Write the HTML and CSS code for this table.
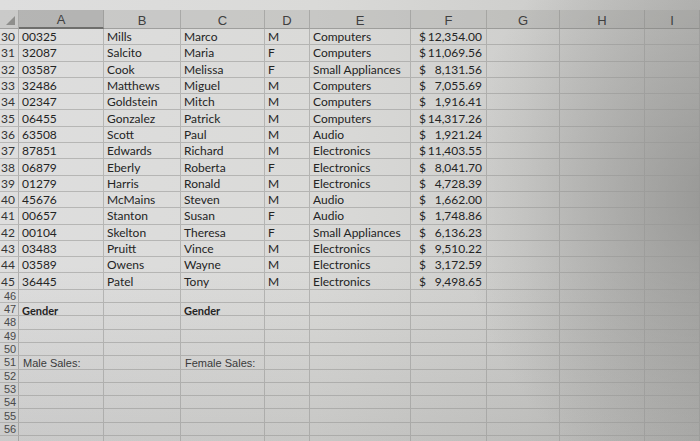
FILE: index.html
```html
<!DOCTYPE html>
<html>
<head>
<meta charset="utf-8">
<link rel="stylesheet" href="styles.css">
</head>
<body>
<div class="sheet">
  <div class="topstrip"></div>
  <div class="grid">
    <div class="hd corner"><span class="tri"></span></div>
    <div class="hd sel">A</div><div class="hd">B</div><div class="hd">C</div><div class="hd">D</div><div class="hd">E</div><div class="hd">F</div><div class="hd">G</div><div class="hd">H</div><div class="hd">I</div>

    <div class="rn">30</div><div class="c">00325</div><div class="c">Mills</div><div class="c">Marco</div><div class="c">M</div><div class="c">Computers</div><div class="c m"><span>$</span><span>12,354.00</span></div><div class="c"></div><div class="c"></div><div class="c"></div>
    <div class="rn">31</div><div class="c">32087</div><div class="c">Salcito</div><div class="c">Maria</div><div class="c">F</div><div class="c">Computers</div><div class="c m"><span>$</span><span>11,069.56</span></div><div class="c"></div><div class="c"></div><div class="c"></div>
    <div class="rn">32</div><div class="c">03587</div><div class="c">Cook</div><div class="c">Melissa</div><div class="c">F</div><div class="c">Small Appliances</div><div class="c m"><span>$</span><span>8,131.56</span></div><div class="c"></div><div class="c"></div><div class="c"></div>
    <div class="rn">33</div><div class="c">32486</div><div class="c">Matthews</div><div class="c">Miguel</div><div class="c">M</div><div class="c">Computers</div><div class="c m"><span>$</span><span>7,055.69</span></div><div class="c"></div><div class="c"></div><div class="c"></div>
    <div class="rn">34</div><div class="c">02347</div><div class="c">Goldstein</div><div class="c">Mitch</div><div class="c">M</div><div class="c">Computers</div><div class="c m"><span>$</span><span>1,916.41</span></div><div class="c"></div><div class="c"></div><div class="c"></div>
    <div class="rn">35</div><div class="c">06455</div><div class="c">Gonzalez</div><div class="c">Patrick</div><div class="c">M</div><div class="c">Computers</div><div class="c m"><span>$</span><span>14,317.26</span></div><div class="c"></div><div class="c"></div><div class="c"></div>
    <div class="rn">36</div><div class="c">63508</div><div class="c">Scott</div><div class="c">Paul</div><div class="c">M</div><div class="c">Audio</div><div class="c m"><span>$</span><span>1,921.24</span></div><div class="c"></div><div class="c"></div><div class="c"></div>
    <div class="rn">37</div><div class="c">87851</div><div class="c">Edwards</div><div class="c">Richard</div><div class="c">M</div><div class="c">Electronics</div><div class="c m"><span>$</span><span>11,403.55</span></div><div class="c"></div><div class="c"></div><div class="c"></div>
    <div class="rn">38</div><div class="c">06879</div><div class="c">Eberly</div><div class="c">Roberta</div><div class="c">F</div><div class="c">Electronics</div><div class="c m"><span>$</span><span>8,041.70</span></div><div class="c"></div><div class="c"></div><div class="c"></div>
    <div class="rn">39</div><div class="c">01279</div><div class="c">Harris</div><div class="c">Ronald</div><div class="c">M</div><div class="c">Electronics</div><div class="c m"><span>$</span><span>4,728.39</span></div><div class="c"></div><div class="c"></div><div class="c"></div>
    <div class="rn">40</div><div class="c">45676</div><div class="c">McMains</div><div class="c">Steven</div><div class="c">M</div><div class="c">Audio</div><div class="c m"><span>$</span><span>1,662.00</span></div><div class="c"></div><div class="c"></div><div class="c"></div>
    <div class="rn">41</div><div class="c">00657</div><div class="c">Stanton</div><div class="c">Susan</div><div class="c">F</div><div class="c">Audio</div><div class="c m"><span>$</span><span>1,748.86</span></div><div class="c"></div><div class="c"></div><div class="c"></div>
    <div class="rn">42</div><div class="c">00104</div><div class="c">Skelton</div><div class="c">Theresa</div><div class="c">F</div><div class="c">Small Appliances</div><div class="c m"><span>$</span><span>6,136.23</span></div><div class="c"></div><div class="c"></div><div class="c"></div>
    <div class="rn">43</div><div class="c">03483</div><div class="c">Pruitt</div><div class="c">Vince</div><div class="c">M</div><div class="c">Electronics</div><div class="c m"><span>$</span><span>9,510.22</span></div><div class="c"></div><div class="c"></div><div class="c"></div>
    <div class="rn">44</div><div class="c">03589</div><div class="c">Owens</div><div class="c">Wayne</div><div class="c">M</div><div class="c">Electronics</div><div class="c m"><span>$</span><span>3,172.59</span></div><div class="c"></div><div class="c"></div><div class="c"></div>
    <div class="rn">45</div><div class="c">36445</div><div class="c">Patel</div><div class="c">Tony</div><div class="c">M</div><div class="c">Electronics</div><div class="c m"><span>$</span><span>9,498.65</span></div><div class="c"></div><div class="c"></div><div class="c"></div>

    <div class="rn s">46</div><div class="c s"></div><div class="c s"></div><div class="c s"></div><div class="c s"></div><div class="c s"></div><div class="c s"></div><div class="c s"></div><div class="c s"></div><div class="c s"></div>
    <div class="rn s">47</div><div class="c s b">Gender</div><div class="c s"></div><div class="c s b">Gender</div><div class="c s"></div><div class="c s"></div><div class="c s"></div><div class="c s"></div><div class="c s"></div><div class="c s"></div>
    <div class="rn s">48</div><div class="c s"></div><div class="c s"></div><div class="c s"></div><div class="c s"></div><div class="c s"></div><div class="c s"></div><div class="c s"></div><div class="c s"></div><div class="c s"></div>
    <div class="rn s">49</div><div class="c s"></div><div class="c s"></div><div class="c s"></div><div class="c s"></div><div class="c s"></div><div class="c s"></div><div class="c s"></div><div class="c s"></div><div class="c s"></div>
    <div class="rn s">50</div><div class="c s"></div><div class="c s"></div><div class="c s"></div><div class="c s"></div><div class="c s"></div><div class="c s"></div><div class="c s"></div><div class="c s"></div><div class="c s"></div>
    <div class="rn s">51</div><div class="c s ar">Male Sales:</div><div class="c s"></div><div class="c s ar">Female Sales:</div><div class="c s"></div><div class="c s"></div><div class="c s"></div><div class="c s"></div><div class="c s"></div><div class="c s"></div>
    <div class="rn s">52</div><div class="c s"></div><div class="c s"></div><div class="c s"></div><div class="c s"></div><div class="c s"></div><div class="c s"></div><div class="c s"></div><div class="c s"></div><div class="c s"></div>
    <div class="rn s">53</div><div class="c s"></div><div class="c s"></div><div class="c s"></div><div class="c s"></div><div class="c s"></div><div class="c s"></div><div class="c s"></div><div class="c s"></div><div class="c s"></div>
    <div class="rn s">54</div><div class="c s"></div><div class="c s"></div><div class="c s"></div><div class="c s"></div><div class="c s"></div><div class="c s"></div><div class="c s"></div><div class="c s"></div><div class="c s"></div>
    <div class="rn s">55</div><div class="c s"></div><div class="c s"></div><div class="c s"></div><div class="c s"></div><div class="c s"></div><div class="c s"></div><div class="c s"></div><div class="c s"></div><div class="c s"></div>
    <div class="rn s">56</div><div class="c s"></div><div class="c s"></div><div class="c s"></div><div class="c s"></div><div class="c s"></div><div class="c s"></div><div class="c s"></div><div class="c s"></div><div class="c s"></div>
    <div class="rn s"></div><div class="c s"></div><div class="c s"></div><div class="c s"></div><div class="c s"></div><div class="c s"></div><div class="c s"></div><div class="c s"></div><div class="c s"></div><div class="c s"></div>
  </div>
</div>
</body>
</html>
```

FILE: styles.css
```css
html, body {
  margin: 0;
  padding: 0;
  width: 700px;
  height: 441px;
  overflow: hidden;
}
body {
  background: #d6d6d4;
}
.sheet {
  width: 700px;
  height: 441px;
  overflow: hidden;
  background:
    radial-gradient(ellipse 260px 300px at 720px 200px, rgba(120,120,118,0.55), rgba(120,120,118,0) 100%),
    linear-gradient(to bottom, rgba(0,0,0,0) 60%, rgba(60,60,58,0.12) 100%),
    linear-gradient(to right, #dedede 0%, #dadad8 45%, #cfcfcd 75%, #bdbdbb 100%);
  font-family: Lato, "Open Sans", sans-serif;
  color: #242424;
}
.topstrip {
  height: 10px;
}
.grid {
  display: grid;
  grid-template-columns: 19px 85px 77px 84px 45px 101px 76px 73px 85px 55px;
  grid-template-rows: 19px repeat(16, 16.3px) repeat(12, 13.3px);
}
.hd {
  background: rgba(150,150,148,0.28);
  border-right: 1px solid rgba(140,140,138,0.5);
  border-bottom: 1px solid rgba(120,120,118,0.5);
  font-family: "Liberation Sans", Arial, sans-serif;
  font-size: 13px;
  color: #404040;
  display: flex;
  align-items: center;
  justify-content: center;
  padding-top: 2px;
  box-sizing: border-box;
}
.hd.sel {
  background: rgba(120,120,118,0.4);
  border-bottom: 2px solid #6e6e6c;
}
.corner {
  position: relative;
}
.tri {
  position: absolute;
  right: 3px;
  bottom: 3px;
  width: 0;
  height: 0;
  border-left: 9px solid transparent;
  border-bottom: 9px solid #8e8e8c;
}
.rn {
  font-size: 12px;
  color: #333;
  display: flex;
  align-items: center;
  padding-left: 1px;
  border-right: 1px solid rgba(130,130,128,0.5);
  border-bottom: 1px solid rgba(150,150,148,0.5);
  box-sizing: border-box;
  white-space: nowrap;
}
.rn.s {
  font-family: "Liberation Sans", Arial, sans-serif;
  font-size: 11px;
  padding-left: 4px;
  color: #4a4a4a;
}
.c {
  font-size: 12px;
  display: flex;
  align-items: center;
  padding-left: 3px;
  border-right: 1px solid rgba(150,150,148,0.55);
  border-bottom: 1px solid rgba(150,150,148,0.55);
  box-sizing: border-box;
  white-space: nowrap;
  overflow: visible;
}
.c.m {
  justify-content: space-between;
  padding-left: 8px;
  padding-right: 4px;
}
.c.s {
  font-size: 11px;
}
.c.b {
  font-weight: bold;
  padding-top: 2px;
}
.c.ar {
  font-family: "Liberation Sans", Arial, sans-serif;
  font-size: 11px;
  color: #3a3a3a;
  padding-left: 4px;
  padding-top: 2px;
}
```
